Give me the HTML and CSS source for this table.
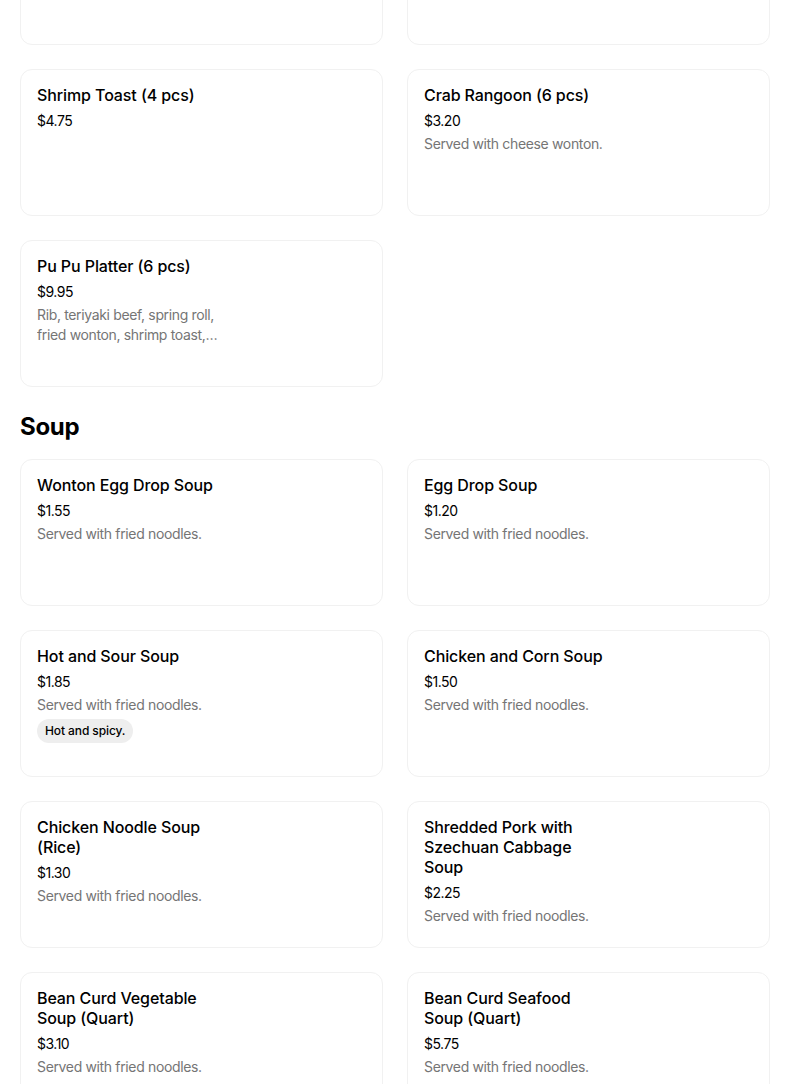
FILE: index.html
```html
<!DOCTYPE html>
<html lang="en">
<head>
<meta charset="utf-8">
<title>Menu</title>
<link rel="stylesheet" href="styles.css">
</head>
<body>
<main class="menu">
  <section class="section">
    <div class="grid">
      <div class="card"><div class="info"></div></div>
      <div class="card"><div class="info"></div></div>
      <div class="card">
        <div class="info">
          <div class="title">Shrimp Toast (4 pcs)</div>
          <div class="price">$4.75</div>
        </div>
      </div>
      <div class="card">
        <div class="info">
          <div class="title">Crab Rangoon (6 pcs)</div>
          <div class="price">$3.20</div>
          <div class="desc">Served with cheese wonton.</div>
        </div>
      </div>
      <div class="card">
        <div class="info">
          <div class="title">Pu Pu Platter (6 pcs)</div>
          <div class="price">$9.95</div>
          <div class="desc clamp">Rib, teriyaki beef, spring roll, fried wonton, shrimp toast, chicken wings and egg roll.</div>
        </div>
      </div>
    </div>
  </section>
  <section class="section">
    <h2 class="heading">Soup</h2>
    <div class="grid">
      <div class="card">
        <div class="info">
          <div class="title">Wonton Egg Drop Soup</div>
          <div class="price">$1.55</div>
          <div class="desc">Served with fried noodles.</div>
        </div>
      </div>
      <div class="card">
        <div class="info">
          <div class="title">Egg Drop Soup</div>
          <div class="price">$1.20</div>
          <div class="desc">Served with fried noodles.</div>
        </div>
      </div>
      <div class="card">
        <div class="info">
          <div class="title">Hot and Sour Soup</div>
          <div class="price">$1.85</div>
          <div class="desc">Served with fried noodles.</div>
          <div class="tags"><span class="tag">Hot and spicy.</span></div>
        </div>
      </div>
      <div class="card">
        <div class="info">
          <div class="title">Chicken and Corn Soup</div>
          <div class="price">$1.50</div>
          <div class="desc">Served with fried noodles.</div>
        </div>
      </div>
      <div class="card">
        <div class="info">
          <div class="title">Chicken Noodle Soup (Rice)</div>
          <div class="price">$1.30</div>
          <div class="desc">Served with fried noodles.</div>
        </div>
      </div>
      <div class="card">
        <div class="info">
          <div class="title">Shredded Pork with Szechuan Cabbage Soup</div>
          <div class="price">$2.25</div>
          <div class="desc">Served with fried noodles.</div>
        </div>
      </div>
      <div class="card">
        <div class="info">
          <div class="title">Bean Curd Vegetable Soup (Quart)</div>
          <div class="price">$3.10</div>
          <div class="desc">Served with fried noodles.</div>
        </div>
      </div>
      <div class="card">
        <div class="info">
          <div class="title">Bean Curd Seafood Soup (Quart)</div>
          <div class="price">$5.75</div>
          <div class="desc">Served with fried noodles.</div>
        </div>
      </div>
    </div>
  </section>
</main>
</body>
</html>
```
FILE: styles.css
```css
* { box-sizing: border-box; }
html, body { margin: 0; padding: 0; background: #ffffff; }
body {
  font-family: Inter, "Liberation Sans", Arial, sans-serif;
  color: #000000;
  overflow: hidden;
}
.menu {
  width: 750px;
  margin: -102px 0 0 20px;
}
.grid {
  display: grid;
  grid-template-columns: 1fr 1fr;
  column-gap: 24px;
  row-gap: 24px;
}
.card {
  height: 147px;
  border: 1px solid #f1f1f1;
  border-radius: 12px;
  padding: 15px 16px 16px 16px;
  background: #fff;
}
.info {
  width: 184px;
  display: flex;
  flex-direction: column;
}
.title {
  font-size: 16px;
  line-height: 20px;
  font-weight: 500;
  color: #000;
  letter-spacing: -0.1px;
}
.price {
  margin-top: 6px;
  font-size: 14px;
  line-height: 20px;
  color: #000;
  letter-spacing: -0.5px;
}
.desc {
  margin-top: 3px;
  font-size: 14px;
  line-height: 20px;
  color: #757575;
  letter-spacing: -0.35px;
}
.clamp {
  display: -webkit-box;
  -webkit-line-clamp: 2;
  -webkit-box-orient: vertical;
  overflow: hidden;
}
.tags { display: flex; margin-top: 4px; }
.tag {
  display: inline-block;
  background: #eeeeee;
  border-radius: 12px;
  padding: 0 8px;
  font-size: 12px;
  line-height: 24px;
  font-weight: 500;
  color: #000;
  letter-spacing: -0.1px;
}
.heading {
  margin: 24px 0 16px 0;
  font-size: 24px;
  line-height: 32px;
  font-weight: 700;
  letter-spacing: -0.3px;
}
```
